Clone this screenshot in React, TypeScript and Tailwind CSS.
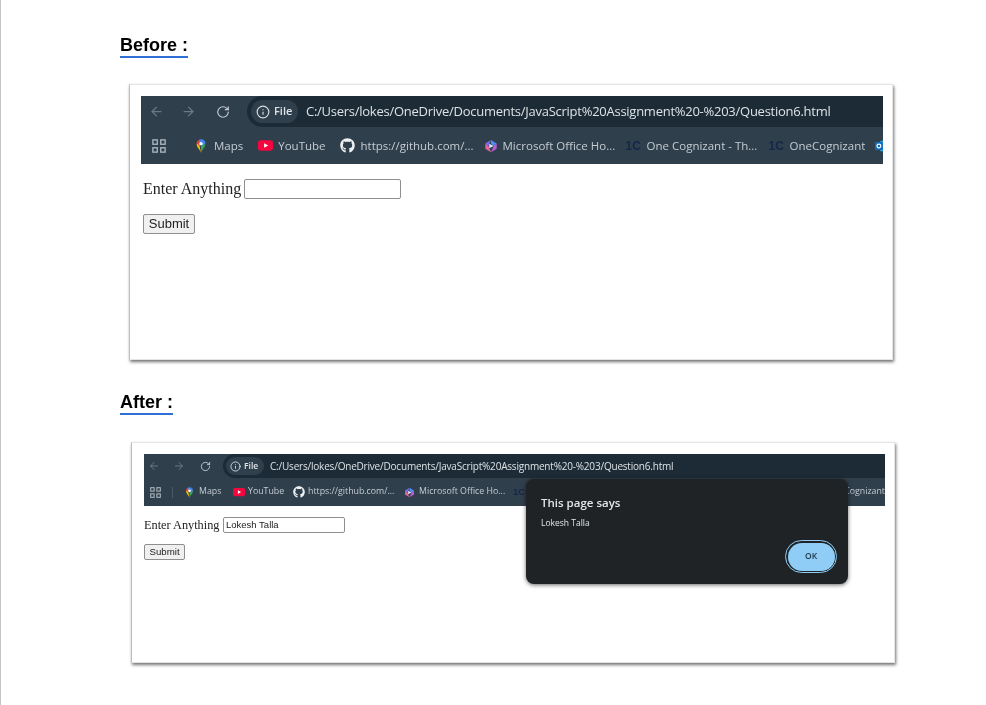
import React from 'react';
import { ArrowLeft, ArrowRight, RotateCw, Info } from 'lucide-react';
import { FaGithub } from 'react-icons/fa';

const URL_TEXT = 'C:/Users/lokes/OneDrive/Documents/JavaScript%20Assignment%20-%203/Question6.html';

const GridIcon = ({ size }: { size: number }) => (
    <svg width={size} height={size} viewBox="0 0 16 16" fill="none" stroke="#aeb8c0" strokeWidth="1.5" className="shrink-0">
        <rect x="1" y="1" width="5" height="5" />
        <rect x="10" y="1" width="5" height="5" />
        <rect x="1" y="10" width="5" height="5" />
        <rect x="10" y="10" width="5" height="5" />
    </svg>
);

const MapsIcon = ({ size }: { size: number }) => (
    <svg width={size} height={size} viewBox="0 0 16 16" className="shrink-0">
        <path d="M8 16 C7 12 3 10 3 5.5 L6 6 Z" fill="#fbbc04" />
        <path d="M8 16 C9 12 13 10 13 5.5 L8 8 Z" fill="#34a853" />
        <path d="M3 5.5 C3 3.5 4 2 5.2 1.2 L8 4 L6 7 Z" fill="#ea4335" />
        <path d="M5.2 1.2 C7 0 10 0 11.5 1.5 L8 5 Z" fill="#4285f4" />
        <path d="M11.5 1.5 C12.6 2.5 13 4 13 5.5 L9.5 7.5 L8 4.5 Z" fill="#4285f4" />
        <circle cx="8" cy="5.5" r="2" fill="#fff" />
    </svg>
);

const YouTubeIcon = ({ size }: { size: number }) => (
    <svg width={size} height={size} viewBox="0 0 16 16" className="shrink-0">
        <rect x="0" y="2.5" width="16" height="11" rx="2.5" fill="#f5063f" />
        <path d="M6.5 5.5 L10.8 8 L6.5 10.5 Z" fill="#fff" />
    </svg>
);

const OfficeIcon = ({ size }: { size: number }) => (
    <svg width={size} height={size} viewBox="0 0 16 16" className="shrink-0">
        <path d="M8 1 L14.5 5 L11 8 L8 5.5 Z" fill="#4f8df0" />
        <path d="M14.5 5 L14.5 11 L8 15 L11 8 Z" fill="#b85cd6" />
        <path d="M8 15 L1.5 11 L1.5 5 L5 8 Z" fill="#e0689f" />
        <path d="M1.5 5 L8 1 L5 8 Z" fill="#7a6cf0" />
        <path d="M6 5.5 L11 8 L6 10.5 Z" fill="#dfe8fb" />
    </svg>
);

const OutlookIcon = ({ size }: { size: number }) => (
    <svg width={size} height={size} viewBox="0 0 16 16" className="shrink-0">
        <rect x="6" y="2" width="10" height="12" rx="1" fill="#28a8ea" />
        <rect x="0" y="3.5" width="9" height="9" rx="1" fill="#0f6cbd" />
        <circle cx="4.5" cy="8" r="2.2" fill="none" stroke="#fff" strokeWidth="1.3" />
    </svg>
);

const Before = () => (
    <div className="ml-[128px] w-[764px] h-[276px] bg-white border border-[#e4e4e4] border-l-[#bdbdbd] shadow-[1px_2px_3px_rgba(0,0,0,0.55)] pl-[11px] pt-[11px] shrink-0">
        <div className="w-[742px] h-[68px] overflow-hidden flex flex-col font-['Open_Sans',sans-serif] blur-[0.35px]">
            <div className="h-[31px] bg-[#2f3f4c] flex items-center shrink-0">
                <ArrowLeft size={15} color="#6d7a85" className="ml-[8px]" />
                <ArrowRight size={15} color="#6d7a85" className="ml-[17px]" />
                <RotateCw size={14} color="#c5ccd2" className="ml-[20px]" />
                <div className="ml-[17px] flex-1 h-[31px] bg-[#1c2b36] rounded-l-full flex items-center pl-[4px]">
                    <div className="h-[23px] w-[47px] rounded-full bg-[#2f3f4b] flex items-center pl-[5px] gap-[4px]">
                        <Info size={14} color="#d7dde2" />
                        <span className="text-[11px] font-semibold text-[#dfe4e8]">File</span>
                    </div>
                    <span className="ml-[8px] text-[13px] text-[#dce2e6] whitespace-nowrap tracking-[-0.02em]">{URL_TEXT}</span>
                </div>
            </div>
            <div className="flex-1 bg-[#303f4c] flex items-center pl-[11px] text-[11.5px] text-[#c4ccd2] whitespace-nowrap">
                <GridIcon size={14} />
                <div className="ml-[14px] w-px h-[14px] bg-[#4d5b67]" />
                <div className="ml-[14px]"><MapsIcon size={14} /></div>
                <span className="ml-[6px]">Maps</span>
                <div className="ml-[15px]"><YouTubeIcon size={15} /></div>
                <span className="ml-[5px]">YouTube</span>
                <FaGithub size={15} color="#eef1f3" className="ml-[14px] shrink-0" />
                <span className="ml-[6px] w-[106px]">https://github.com/...</span>
                <div className="ml-[17px]"><OfficeIcon size={14} /></div>
                <span className="ml-[5px] w-[106px]">Microsoft Office Ho...</span>
                <span className="ml-[17px] w-[15px] text-[#16264a] font-bold font-['Liberation_Sans',sans-serif] text-[12px]">1C</span>
                <span className="ml-[6px] w-[105px]">One Cognizant - Th...</span>
                <span className="ml-[17px] w-[15px] text-[#16264a] font-bold font-['Liberation_Sans',sans-serif] text-[12px]">1C</span>
                <span className="ml-[6px] w-[70px]">OneCognizant</span>
                <div className="ml-[15px]"><OutlookIcon size={14} /></div>
            </div>
        </div>
        <div className="mt-[15px] ml-[2px] flex items-center font-['Liberation_Serif',serif] text-[16px] text-[#222] leading-[20px] blur-[0.3px]">
            <span className="w-[101px] whitespace-nowrap">Enter Anything :</span>
            <div className="w-[157px] h-[20px] bg-white border border-[#8f8f8f] rounded-[2px]" />
        </div>
        <div className="mt-[15px] ml-[2px] w-[52px] h-[20px] bg-[#f0f0f0] border border-[#8f8f8f] rounded-[2px] flex items-center justify-center font-['Liberation_Sans',sans-serif] text-[13px] text-[#222] blur-[0.3px]">
            Submit
        </div>
    </div>
);

const After = () => (
    <div className="relative ml-[130px] w-[764px] h-[221px] bg-white border border-[#e4e4e4] border-l-[#bdbdbd] shadow-[1px_2px_3px_rgba(0,0,0,0.55)] pl-[12px] pt-[11px] shrink-0">
        <div className="w-[741px] h-[52px] overflow-hidden flex flex-col font-['Open_Sans',sans-serif] blur-[0.35px]">
            <div className="h-[24px] bg-[#2f3f4c] flex items-center shrink-0">
                <ArrowLeft size={12} color="#6d7a85" className="ml-[4px]" />
                <ArrowRight size={12} color="#6d7a85" className="ml-[13px]" />
                <RotateCw size={11} color="#c5ccd2" className="ml-[15px]" />
                <div className="ml-[12px] flex-1 h-[24px] bg-[#1c2b36] rounded-l-full flex items-center pl-[3px]">
                    <div className="h-[18px] w-[38px] rounded-full bg-[#2f3f4b] flex items-center pl-[4px] gap-[3px]">
                        <Info size={11} color="#d7dde2" />
                        <span className="text-[8.5px] font-semibold text-[#dfe4e8]">File</span>
                    </div>
                    <span className="ml-[6px] text-[10px] text-[#dce2e6] whitespace-nowrap tracking-[-0.02em]">{URL_TEXT}</span>
                </div>
            </div>
            <div className="flex-1 bg-[#303f4c] flex items-center pl-[6px] text-[8.8px] text-[#c4ccd2] whitespace-nowrap">
                <GridIcon size={11} />
                <div className="ml-[11px] w-px h-[11px] bg-[#4d5b67]" />
                <div className="ml-[11px]"><MapsIcon size={11} /></div>
                <span className="ml-[4px] w-[22px]">Maps</span>
                <div className="ml-[12px]"><YouTubeIcon size={12} /></div>
                <span className="ml-[3px] w-[34px]">YouTube</span>
                <FaGithub size={12} color="#eef1f3" className="ml-[11px] shrink-0" />
                <span className="ml-[3px] w-[82px]">https://github.com/...</span>
                <div className="ml-[14px]"><OfficeIcon size={11} /></div>
                <span className="ml-[4px] w-[81px]">Microsoft Office Ho...</span>
                <span className="ml-[13px] w-[12px] text-[#16264a] font-bold font-['Liberation_Sans',sans-serif] text-[9.5px]">1C</span>
                <span className="ml-auto text-[8.8px]">OneCognizant</span>
            </div>
        </div>
        <div className="mt-[11px] flex items-center font-['Liberation_Serif',serif] text-[12.3px] text-[#222] leading-[16px] blur-[0.3px]">
            <span className="w-[79px] whitespace-nowrap">Enter Anything :</span>
            <div className="w-[122px] h-[16px] bg-white border border-[#8f8f8f] rounded-[2px] flex items-center pl-[2px] font-['Liberation_Sans',sans-serif] text-[9.5px]">
                Lokesh Talla
            </div>
        </div>
        <div className="mt-[11px] w-[41px] h-[16px] bg-[#f0f0f0] border border-[#8f8f8f] rounded-[2px] flex items-center justify-center font-['Liberation_Sans',sans-serif] text-[9.7px] text-[#222] blur-[0.3px]">
            Submit
        </div>
        {/* alert dialog sits over the toolbar */}
        <div className="absolute left-[394px] top-[36px] w-[322px] h-[105px] bg-[#1f2326] rounded-[8px] shadow-[0_1px_4px_rgba(0,0,0,0.6)] font-['Open_Sans',sans-serif] text-[#e3e6e8] pl-[15px] pt-[15px] blur-[0.3px]">
            <div className="text-[11.5px] font-semibold leading-[18px]">This page says</div>
            <div className="mt-[5px] text-[8.5px] leading-[12px]">Lokesh Talla</div>
            <div className="absolute right-[11px] bottom-[11px] w-[52px] h-[33px] rounded-full border-[1.5px] border-[#8fcdf7] p-[1.5px]">
                <div className="w-full h-full rounded-full bg-[#8fcdf7] flex items-center justify-center text-[8.5px] font-semibold text-[#1d3444]">
                    OK
                </div>
            </div>
        </div>
    </div>
);

const Heading = ({ text }: { text: string }) => (
    <h2 className="ml-[119px] w-fit h-[23px] font-['Liberation_Sans',sans-serif] font-bold text-[18px] leading-[21px] text-black border-b-[2px] border-[#2f6fd6] blur-[0.2px]">
        {text}
    </h2>
);

export default function App() {
    return (
        <div className="w-[986px] h-[705px] bg-white border-l border-[#c6c6c6] overflow-hidden flex flex-col pt-[35px]">
            <Heading text="Before :" />
            <div className="h-[26px] shrink-0" />
            <Before />
            <div className="h-[32px] shrink-0" />
            <Heading text="After :" />
            <div className="h-[27px] shrink-0" />
            <After />
        </div>
    );
}
